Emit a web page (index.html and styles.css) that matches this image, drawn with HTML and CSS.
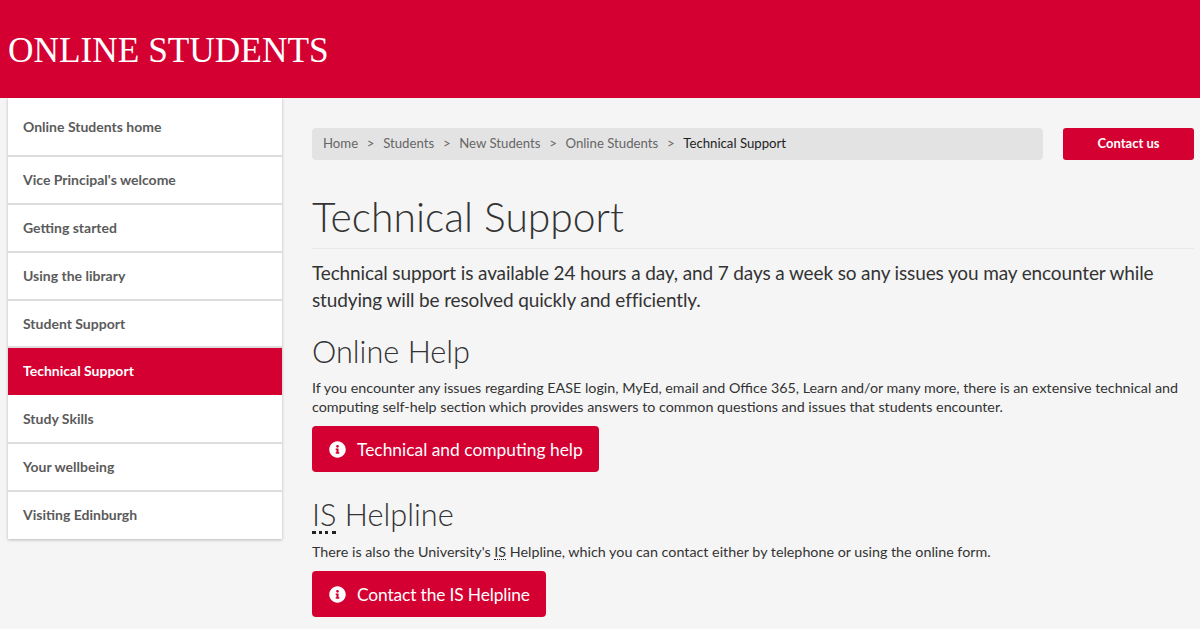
FILE: index.html
```html
<!DOCTYPE html>
<html lang="en">
<head>
<meta charset="utf-8">
<title>Technical Support</title>
<link rel="stylesheet" href="styles.css">
</head>
<body>
<header class="banner"><div class="site-title">ONLINE STUDENTS</div></header>
<div class="layout">
  <nav class="sidenav">
    <a class="nav-item nav-first">Online Students home</a>
    <a class="nav-item">Vice Principal's welcome</a>
    <a class="nav-item">Getting started</a>
    <a class="nav-item">Using the library</a>
    <a class="nav-item nav-before-active">Student Support</a>
    <a class="nav-item nav-active">Technical Support</a>
    <a class="nav-item nav-after-active">Study Skills</a>
    <a class="nav-item">Your wellbeing</a>
    <a class="nav-item nav-last">Visiting Edinburgh</a>
  </nav>
  <main class="content">
    <div class="topbar">
      <ol class="crumbs">
        <li>Home</li><li class="sep">&gt;</li>
        <li>Students</li><li class="sep">&gt;</li>
        <li>New Students</li><li class="sep">&gt;</li>
        <li>Online Students</li><li class="sep">&gt;</li>
        <li class="crumb-current">Technical Support</li>
      </ol>
      <a class="contact">Contact us</a>
    </div>
    <h1>Technical Support</h1>
    <p class="lead">Technical support is available 24 hours a day, and 7 days a week so any issues you may encounter while studying will be resolved quickly and efficiently.</p>
    <h2>Online Help</h2>
    <p class="body">If you encounter any issues regarding EASE login, MyEd, email and Office 365, Learn and/or many more, there is an extensive technical and computing self-help section which provides answers to common questions and issues that students encounter.</p>
    <a class="btn">
      <svg class="btn-icon" viewBox="0 0 512 512"><path fill="#fff" d="M256 8C119 8 8 119 8 256s111 248 248 248 248-111 248-248S393 8 256 8zm0 110c23 0 42 19 42 42s-19 42-42 42-42-19-42-42 19-42 42-42zm56 254c0 7-5 12-12 12h-88c-7 0-12-5-12-12v-24c0-7 5-12 12-12h12v-64h-12c-7 0-12-5-12-12v-24c0-7 5-12 12-12h64c7 0 12 5 12 12v100h12c7 0 12 5 12 12v24z"/></svg>
      Technical and computing help
    </a>
    <h2 class="h2-second"><abbr class="abbr-big">IS</abbr> Helpline</h2>
    <p class="body body-single">There is also the University's <abbr class="abbr-small">IS</abbr> Helpline, which you can contact either by telephone or using the online form.</p>
    <a class="btn btn-tight">
      <svg class="btn-icon" viewBox="0 0 512 512"><path fill="#fff" d="M256 8C119 8 8 119 8 256s111 248 248 248 248-111 248-248S393 8 256 8zm0 110c23 0 42 19 42 42s-19 42-42 42-42-19-42-42 19-42 42-42zm56 254c0 7-5 12-12 12h-88c-7 0-12-5-12-12v-24c0-7 5-12 12-12h12v-64h-12c-7 0-12-5-12-12v-24c0-7 5-12 12-12h64c7 0 12 5 12 12v100h12c7 0 12 5 12 12v24z"/></svg>
      Contact the IS Helpline
    </a>
  </main>
</div>
</body>
</html>
```

FILE: styles.css
```css
* { box-sizing: border-box; }
html, body { margin: 0; height: 629px; overflow: hidden; }
body {
  background: #f5f5f5;
  font-family: Lato, "Noto Sans", sans-serif;
  color: #333;
}
.banner {
  height: 98px;
  background: #d50032;
  display: flex;
  align-items: center;
  padding: 4px 8px 0;
}
.site-title {
  font-family: "Liberation Serif", serif;
  font-size: 35.3px;
  color: #fff;
  line-height: 1;
}
.layout { display: flex; align-items: flex-start; padding-left: 8px; }
.sidenav {
  width: 274px;
  flex: none;
  display: flex;
  flex-direction: column;
  background: #fff;
  box-shadow: 0 1px 3px rgba(0,0,0,.25);
}
.nav-item {
  height: 48px;
  display: flex;
  align-items: center;
  padding: 0 15px 2px;
  font-size: 14px;
  font-weight: 700;
  color: #5b5b5b;
  border-bottom: 2px solid #ddd;
}
.nav-first { height: 59px; padding-bottom: 1px; }
.nav-before-active { height: 47px; padding-bottom: 1px; }
.nav-active { height: 47px; padding-bottom: 0; background: #d50032; color: #fff; border-bottom-color: #d50032; }
.nav-after-active { height: 49px; padding-bottom: 1px; }
.nav-last { border-bottom: 0; height: 47px; padding-bottom: 3px; }
.content { flex: 1; min-width: 0; padding: 30px 6px 0 30px; }
.topbar { display: flex; gap: 20px; }
.crumbs {
  flex: 1;
  height: 32px;
  margin: 0;
  padding: 0 11px 3px;
  list-style: none;
  display: flex;
  align-items: center;
  gap: 7.7px;
  background: #e3e3e3;
  border-radius: 4px;
  font-size: 13.2px;
  color: #666;
}
.crumb-current { color: #222; }
.sep { padding: 0 1px; }
.contact {
  width: 131px;
  height: 32px;
  padding-bottom: 3px;
  display: flex;
  align-items: center;
  justify-content: center;
  background: #d50032;
  color: #fff;
  font-size: 13px;
  font-weight: 700;
  border-radius: 3px;
}
h1 {
  margin: 33px 0 0;
  height: 56px;
  font-weight: 300;
  font-size: 40.8px;
  line-height: 48px;
  color: #333;
  border-bottom: 1px solid #e9e9e9;
}
.lead {
  margin: 10px 0 0;
  font-size: 19px;
  line-height: 27px;
  letter-spacing: -.13px;
  color: #333;
}
h2 {
  margin: 19px 0 0;
  font-weight: 300;
  font-size: 30.7px;
  line-height: 40px;
  color: #333;
}
.h2-second { margin-top: 23px; }
.body {
  margin: 6px 0 0;
  font-size: 14.3px;
  line-height: 19px;
  color: #333;
}
.body-single { margin-top: 7px; }
.btn {
  margin-top: 10px;
  height: 46px;
  display: inline-flex;
  align-items: center;
  gap: 11px;
  padding: 0 16px 0 17px;
  background: #d50032;
  border-radius: 4px;
  color: #fff;
  font-size: 17.4px;
  vertical-align: top;
}
.btn-tight { letter-spacing: -.15px; }
.btn-icon { width: 17px; height: 17px; flex: none; }
abbr { text-decoration: none; }
.abbr-big { border-bottom: 3px dotted #222; display: inline-block; line-height: 32px; }
.abbr-small { border-bottom: 1px dotted #222; display: inline-block; line-height: 15px; }
```
